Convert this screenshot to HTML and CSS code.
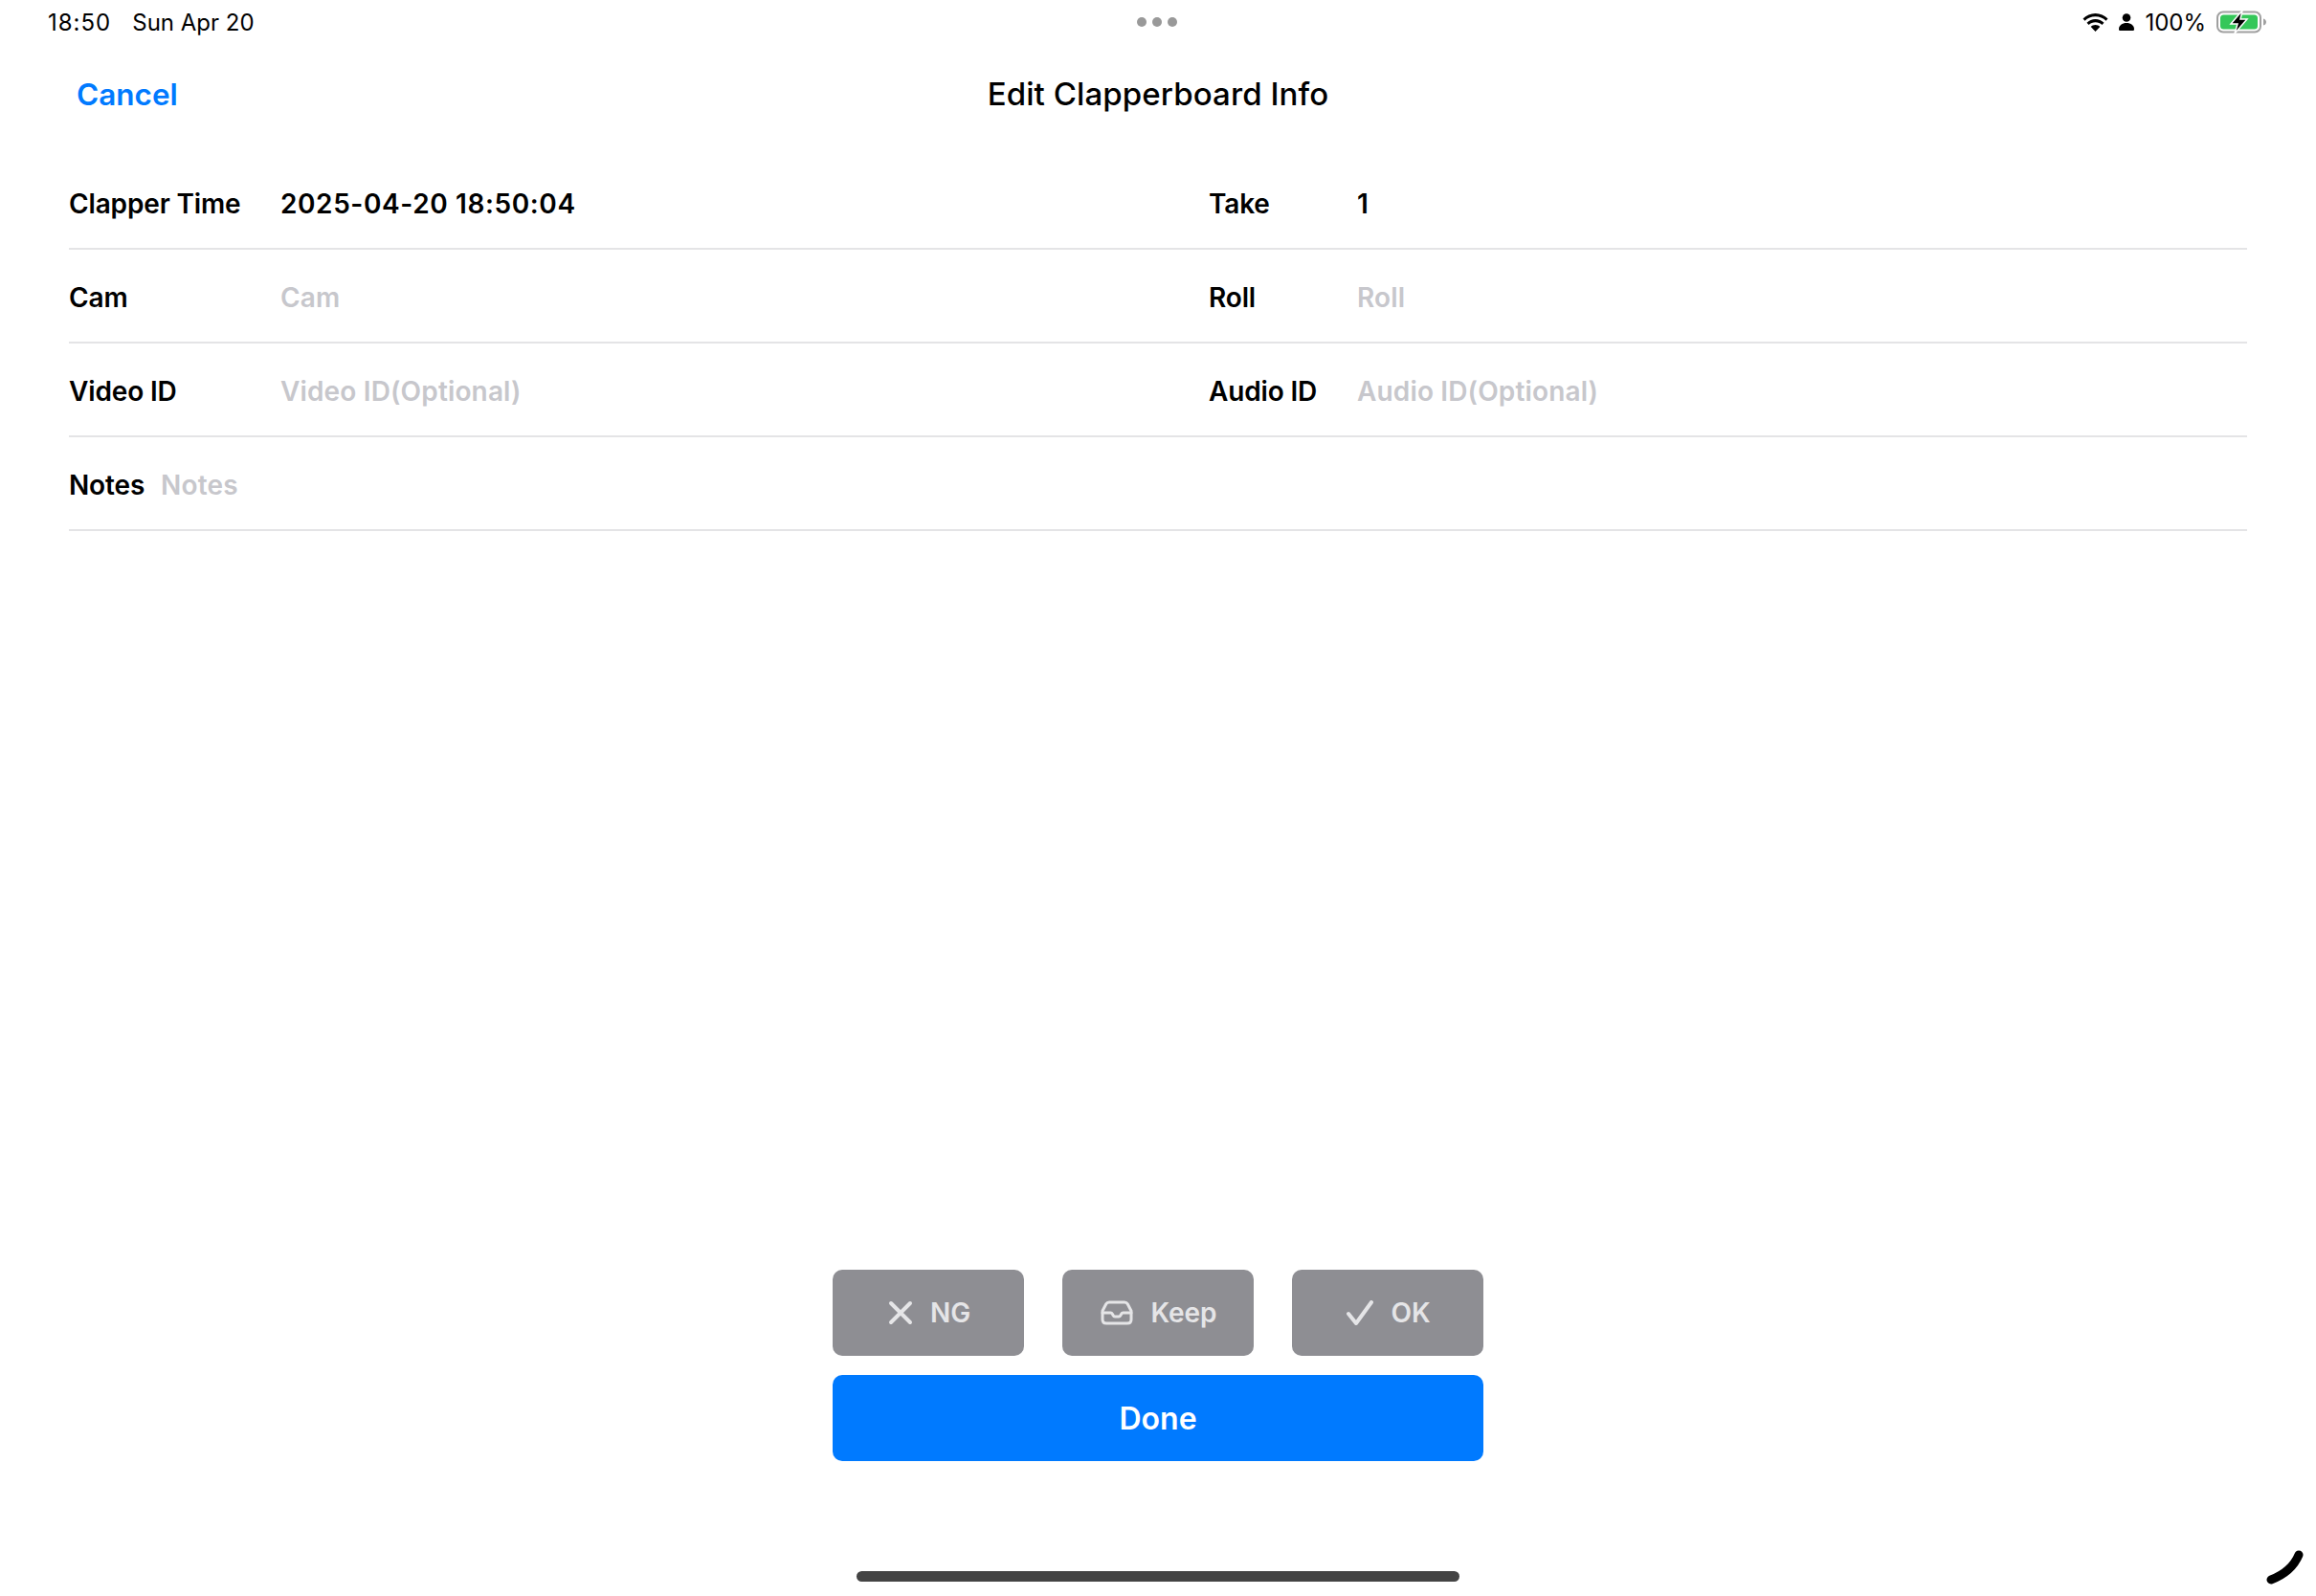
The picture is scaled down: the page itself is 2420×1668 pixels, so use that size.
FILE: index.html
```html
<!DOCTYPE html>
<html lang="en">
<head>
    <meta charset="UTF-8">
    <title>Edit Clapperboard Info</title>
    <link rel="stylesheet" href="styles.css">
</head>
<body>

    <div class="status-bar">
        <div class="status-left">
            <span class="status-time">18:50</span>
            <span>Sun Apr 20</span>
        </div>
        <div class="status-dots"><i></i><i></i><i></i></div>
        <div class="status-right">
            <svg class="icon-wifi" width="27" height="19" viewBox="0.500 0 27 19">
                <path d="M14 3.2c4.400 0 8.200 1.700 11 4.500l2-2.100C23.600 2.200 19 0 14 0S4.400 2.200 1 5.600l2 2.100c2.800-2.800 6.600-4.500 11-4.500z"/>
                <path d="M14 9.200c2.700 0 5.100 1 6.900 2.800l2.100-2.200C20.600 7.500 17.500 6 14 6s-6.600 1.500-9 3.800l2.100 2.200c1.800-1.800 4.200-2.800 6.900-2.800z"/>
                <path d="M14 12c-1.900 0-3.500.7-4.800 1.900L14 19l4.800-5.100C17.500 12.700 15.900 12 14 12z"/>
            </svg>
            <svg class="icon-person" width="16" height="18" viewBox="0 0 16 18">
                <circle cx="8" cy="4.500" r="4.300"/>
                <path d="M0 16.500C0 12.500 3.500 10 8 10s8 2.500 8 6.500c0 1-.6 1.500-1.600 1.500H1.600C.6 18 0 17.500 0 16.500z"/>
            </svg>
            <span class="battery-text">100%</span>
            <svg class="icon-battery" width="52" height="24" viewBox="0 0 52 24">
                <rect x="1" y="1.500" width="45" height="21" rx="6" fill="none" stroke="#a0a0a0" stroke-width="2"/>
                <rect x="4" y="4.500" width="39" height="15" rx="3.500" fill="#34c759"/>
                <path d="M49 8.500c2 .5 3 2 3 3.500s-1 3-3 3.500z" fill="#a0a0a0"/>
                <path d="M27 0L15 14h7l-3 10 13-15h-7l2-9z" fill="#000" stroke="#fff" stroke-width="1.500"/>
            </svg>
        </div>
    </div>

    <div class="nav-bar">
        <a class="nav-cancel">Cancel</a>
        <h1 class="nav-title">Edit Clapperboard Info</h1>
    </div>

    <div class="form-list">
        <div class="form-row">
            <div class="field field-left">
                <label class="field-label label-left">Clapper Time</label>
                <span class="field-value">2025-04-20 18:50:04</span>
            </div>
            <div class="field">
                <label class="field-label label-right">Take</label>
                <span class="field-value">1</span>
            </div>
        </div>
        <div class="form-row">
            <div class="field field-left">
                <label class="field-label label-left">Cam</label>
                <span class="field-placeholder">Cam</span>
            </div>
            <div class="field">
                <label class="field-label label-right">Roll</label>
                <span class="field-placeholder">Roll</span>
            </div>
        </div>
        <div class="form-row">
            <div class="field field-left">
                <label class="field-label label-left">Video ID</label>
                <span class="field-placeholder">Video ID(Optional)</span>
            </div>
            <div class="field">
                <label class="field-label label-right">Audio ID</label>
                <span class="field-placeholder">Audio ID(Optional)</span>
            </div>
        </div>
        <div class="form-row">
            <div class="field">
                <label class="field-label label-notes">Notes</label>
                <span class="field-placeholder">Notes</span>
            </div>
        </div>
    </div>

    <div class="actions">
        <div class="action-row">
            <button class="btn-status">
                <svg width="26" height="26" viewBox="0 0 26 26"><path d="M3 3l20 20M23 3L3 23"/></svg>
                <span>NG</span>
            </button>
            <button class="btn-status">
                <svg class="icon-tray" width="34" height="26" viewBox="0 0 34 26">
                    <path d="M9 2h16c1.500 0 2.500.6 3.200 1.800L32 11v9c0 2.500-1.500 4-4 4H6c-2.500 0-4-1.500-4-4v-9l3.800-7.200C6.500 2.600 7.500 2 9 2z"/>
                    <path d="M2 13h8.500c1 0 1.500.6 2 1.500l.5 1c.4.8 1 1.500 2 1.500h4c1 0 1.600-.7 2-1.500l.5-1c.5-.9 1-1.500 2-1.500H32"/>
                </svg>
                <span>Keep</span>
            </button>
            <button class="btn-status">
                <svg width="28" height="26" viewBox="0 0 28 26"><path d="M2 14l8 10L26 2"/></svg>
                <span>OK</span>
            </button>
        </div>
        <button class="btn-done">Done</button>
    </div>

    <div class="home-bar"></div>

    <svg class="pencil-mark" width="40" height="36" viewBox="0 0 40 36">
        <path d="M5 31C18 26 29 17 34 5"/>
    </svg>

</body>
</html>
```

FILE: styles.css
```css
html, body {
    height: 100%;
}

body {
    margin: 0;
    padding: 0;
    height: 1668px;
    box-sizing: border-box;
    position: relative;
    display: flex;
    flex-direction: column;
    overflow: hidden;
    background: #fff;
    color: #000;
    font-family: Inter, "Liberation Sans", sans-serif;
}

.status-bar {
    display: grid;
    grid-template-columns: 1fr auto 1fr;
    align-items: center;
    height: 46px;
    padding: 0 52px 0 50px;
    font-size: 24px;
}

.status-left {
    display: flex;
    gap: 22px;
}

.status-time {
    letter-spacing: 1px;
}

.status-dots {
    display: flex;
    gap: 6px;
}

.status-dots i {
    width: 10px;
    height: 10px;
    border-radius: 50%;
    background: #999;
}

.status-right {
    display: flex;
    align-items: center;
    justify-content: flex-end;
    gap: 11px;
}

.nav-bar {
    position: relative;
    height: 104px;
    display: flex;
    align-items: center;
    justify-content: center;
}

.nav-cancel {
    position: absolute;
    left: 80px;
    color: #007aff;
    font-size: 31.500px;
    font-weight: 600;
}

.nav-title {
    margin: 0;
    font-size: 33px;
    font-weight: 500;
    letter-spacing: .1px;
}

.form-list {
    margin: 13px 72px 0;
}

.form-row {
    display: flex;
    align-items: center;
    box-sizing: border-box;
    height: 98px;
    padding-top: 4px;
    border-bottom: 2px solid #e4e4e6;
    font-size: 28px;
    font-weight: 600;
}

.field {
    display: flex;
    align-items: center;
}

.field-left {
    width: 1191px;
}

.field-label {
    display: block;
    letter-spacing: -.15px;
}

.label-left {
    width: 221px;
}

.label-right {
    width: 155px;
}

.label-notes {
    margin-right: 17px;
}

.field-value {
    letter-spacing: .6px;
}

.field-placeholder {
    color: #c7c7cc;
    letter-spacing: .15px;
}

.actions {
    margin-top: auto;
    margin-bottom: 141px;
    align-self: center;
    width: 680px;
    display: flex;
    flex-direction: column;
    gap: 20px;
}

.action-row {
    display: flex;
    justify-content: space-between;
}

button {
    border: none;
    padding: 0;
    font-family: inherit;
    height: 90px;
}

.btn-status {
    width: 200px;
    padding-left: 2px;
    background: #8e8e93;
    color: #e5e5e7;
    border-radius: 10px;
    font-size: 28px;
    font-weight: 600;
    display: flex;
    align-items: center;
    justify-content: center;
    gap: 18px;
}

.btn-status svg {
    fill: none;
    stroke: #e5e5e7;
    stroke-width: 4;
    stroke-linecap: round;
    stroke-linejoin: round;
}

.btn-status .icon-tray {
    stroke-width: 3;
}

.btn-done {
    background: #007aff;
    color: #fff;
    border-radius: 10px;
    font-size: 32px;
    font-weight: 600;
}

.home-bar {
    position: absolute;
    left: 895px;
    bottom: 15px;
    width: 630px;
    height: 11px;
    border-radius: 6px;
    background: #444;
}

.pencil-mark {
    position: absolute;
    right: 12px;
    bottom: 12px;
    fill: none;
    stroke: #000;
    stroke-width: 9;
    stroke-linecap: round;
}
```
